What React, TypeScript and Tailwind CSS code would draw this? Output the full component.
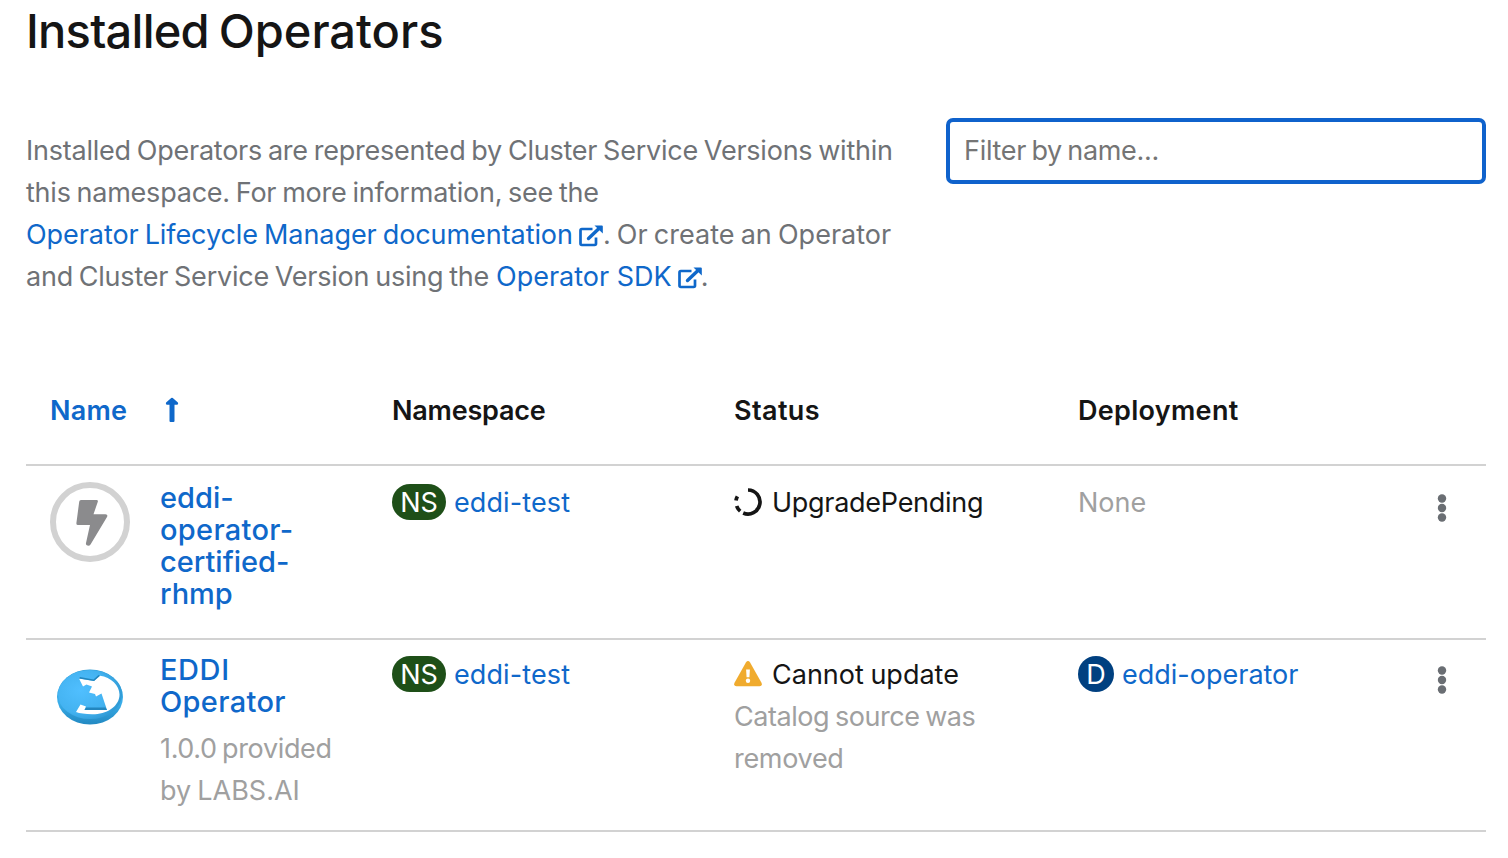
import React from "react";

const ExternalLinkIcon = () => (
  <svg viewBox="0 0 24 22" className="h-[22px] w-6 shrink-0 translate-y-px" fill="none" stroke="#0f68ca">
    <path d="M13.500 4H2.900Q1.500 4 1.500 5.400V18.600Q1.500 20 2.900 20H15.600Q17 20 17 18.600V12.500" strokeWidth="2.700" />
    <path d="M9.500 13.500 20 3.500" strokeWidth="3.400" strokeLinecap="round" />
    <path d="M15.500 0.500H22.800Q23.800 0.500 23.800 1.500V8.500Z" fill="#0f68ca" stroke="none" />
  </svg>
);

const SortUpIcon = () => (
  <svg viewBox="0 0 14 26" className="h-[26px] w-[14px]" fill="#0f68ca">
    <path d="M6.200 1.100Q7 .400 7.800 1.100L12.900 5.600Q13.800 7.600 12.200 7.800H9.500V24Q9.500 25 8.500 25H5.500Q4.500 25 4.500 24V7.800H1.800Q.200 7.600 1.100 5.600Z" />
  </svg>
);

const BoltIcon = () => (
  <svg viewBox="0 0 80 80" className="h-20 w-20 shrink-0">
    <circle cx="40" cy="40" r="37" fill="#fff" stroke="#d2d2d2" strokeWidth="6" />
    <path d="M31 18H46.500Q48.300 18 47.800 19.800L43.500 32.300H55.500Q58.300 32.500 57 35L40.500 62.500Q39.500 64 37.500 63.600Q35.600 63 36 61L40 43H28Q26.200 43 26.400 41L29.200 19.800Q29.400 18 31 18Z" fill="#8b8b8d" />
  </svg>
);

const EddiLogo = () => (
  <svg viewBox="0 0 80 80" className="h-20 w-20 shrink-0">
    <defs>
      <linearGradient id="rim" x1="0" y1="0" x2="0" y2="1">
        <stop offset="0" stopColor="#2f9bd2" />
        <stop offset=".6" stopColor="#3aaeea" />
        <stop offset="1" stopColor="#2289c2" />
      </linearGradient>
      <radialGradient id="face" cx=".35" cy=".42" r=".65">
        <stop offset="0" stopColor="#50bfff" />
        <stop offset=".7" stopColor="#43b2f0" />
        <stop offset="1" stopColor="#309bd6" />
      </radialGradient>
    </defs>
    <ellipse cx="40" cy="40" rx="33" ry="27.500" fill="url(#rim)" />
    <ellipse cx="40" cy="37.500" rx="32" ry="24.500" fill="url(#face)" />
    <path d="M29 21.500 44 24 50 18.800C61 20 69.500 29 69.500 37.500C69.500 48 59 56.500 45 57.200C37 57.500 30 56.500 26 55L30.500 47.500 36 49.500 34.500 53 57 53 51.500 36.500 46 39.500 45 37 39 35.500 42 29.500 36.500 27.500 33 29.500Z" fill="#fff" />
    <path d="M34.500 53 36 50.500 55.500 50.500 57 53Z M29 21.500 30 20 43.500 22.500 48.500 18 50 18.800 44 24Z" fill="#2386be" />
  </svg>
);

const PendingIcon = () => (
  <svg viewBox="0 0 28 28" className="h-7 w-7 shrink-0 -translate-y-px" fill="none" stroke="#151515" strokeWidth="3.700">
    <path d="M14 2A12 12 0 1 1 9.200 25" />
    <path d="M6.200 23.200A12 12 0 0 1 2.700 18" />
    <path d="M2 12.600A12 12 0 0 1 3.400 8.400" />
  </svg>
);

const WarningIcon = () => (
  <svg viewBox="0 0 28 26" className="h-[26px] w-7 shrink-0 -translate-y-px">
    <path d="M11.900 1.500Q14 -1.300 16.100 1.500L27.600 22Q28.500 25 25.600 25.300H2.400Q-.500 25 .400 22Z" fill="#f0ab2e" />
    <path d="M12.100 8.500H15.900L15.400 16.300H12.600Z" fill="#fff" />
    <circle cx="14" cy="19.800" r="2.200" fill="#fff" />
  </svg>
);

const Kebab = () => (
  <svg viewBox="0 0 10 28" className="h-7 w-[10px]" fill="#6a6e73">
    <circle cx="5" cy="4.500" r="4.200" />
    <circle cx="5" cy="14" r="4.200" />
    <circle cx="5" cy="23.500" r="4.200" />
  </svg>
);

const NamespaceCell = () => (
  <div className="flex h-[42px] items-center">
    <span className="-mt-0.5 flex h-9 w-[54px] items-center justify-center rounded-full bg-[#1e4f18] pt-0.5 text-white">NS</span>
    <a className="ml-2 tracking-[0.1px] text-[#0f68ca]">eddi-test</a>
  </div>
);

export default function App() {
  return (
    <main className="h-[858px] w-[1508px] overflow-hidden whitespace-nowrap bg-white pl-[26px] pr-[22px] font-['Inter',sans-serif] text-[27px] leading-[42px] text-[#151515]">
      <h1 className="h-[118px] text-[47px] font-medium leading-[62px] [word-spacing:-2px]">
        <span className="tracking-[-0.75px]">Installed </span><span>Operators</span>
      </h1>
      <section className="flex h-[242px] justify-between">
        <div className="pt-3 text-[#6f7276]">
          <div className="tracking-[-0.23px] [word-spacing:-1.5px]">Installed Operators are represented by Cluster Service Versions within</div>
          <div className="tracking-[-0.23px] [word-spacing:-1.5px]">this namespace. For more information, see the</div>
          <div className="flex items-center">
            <a className="tracking-[-0.07px] text-[#0f68ca] [word-spacing:-1.5px]">Operator Lifecycle Manager documentation</a>
            <span className="ml-[6px] flex"><ExternalLinkIcon /></span>
            <span className="[word-spacing:-1.4px]">. Or create an Operator</span>
          </div>
          <div className="flex items-center">
            <span className="tracking-[-0.23px] [word-spacing:-1.5px]">and Cluster Service Version using the</span>
            <a className="ml-[7px] text-[#0f68ca]">Operator SDK</a>
            <span className="ml-[6px] flex"><ExternalLinkIcon /></span>
            <span className="-ml-px">.</span>
          </div>
        </div>
        <input
          className="h-[66px] w-[540px] rounded-[7px] border-4 border-[#0f62cc] px-[14px] pb-[2px] tracking-[-0.3px] outline-none [word-spacing:-2px] placeholder:text-[#757575]"
          placeholder="Filter by name..."
        />
      </section>
      <section>
        <div className="grid h-[106px] grid-cols-[342px_342px_344px_1fr] border-b-2 border-[#d2d2d2] pl-6 pt-[30px] font-semibold">
          <div className="flex h-[42px] items-center text-[#0f68ca]">
            <span className="w-[115px] tracking-[0.2px]">Name</span>
            <span className="-mt-0.5"><SortUpIcon /></span>
          </div>
          <span className="tracking-[-0.2px]">Namespace</span>
          <span className="tracking-[0.4px]">Status</span>
          <span className="tracking-[0.3px]">Deployment</span>
        </div>
        <div className="grid h-[174px] grid-cols-[342px_342px_344px_352px_1fr] border-b-2 border-[#d2d2d2] pl-6 pt-4">
          <div className="flex items-start">
            <BoltIcon />
            <a className="ml-[30px] text-[29px] font-medium leading-8 text-[#0f68ca]">
              <span className="block">eddi-</span>
              <span className="block tracking-[0.3px]">operator-</span>
              <span className="block">certified-</span>
              <span className="block">rhmp</span>
            </a>
          </div>
          <NamespaceCell />
          <div className="flex h-[42px] items-center">
            <PendingIcon />
            <span className="ml-[10px] tracking-[-0.28px]">UpgradePending</span>
          </div>
          <span className="text-[#a0a0a0]">None</span>
          <div className="pl-[7px] pt-3"><Kebab /></div>
        </div>
        <div className="grid h-[192px] grid-cols-[342px_342px_344px_352px_1fr] border-b-2 border-[#d2d2d2] pl-6 pt-[14px]">
          <div className="flex items-start">
            <div className="pt-[3px]"><EddiLogo /></div>
            <div className="ml-[30px]">
              <a className="block text-[29px] font-medium leading-8 text-[#0f68ca]">
                <span className="block tracking-[0.6px]">EDDI</span>
                <span className="block tracking-[0.35px]">Operator</span>
              </a>
              <div className="pt-[10px] text-[#a0a0a0]">
                <span className="block tracking-[-0.35px] [word-spacing:-2px]">1.0.0 provided</span>
                <span className="block [word-spacing:-1.5px]">by LABS.AI</span>
              </div>
            </div>
          </div>
          <NamespaceCell />
          <div>
            <div className="flex h-[42px] items-center">
              <WarningIcon />
              <span className="ml-[10px] [word-spacing:-1px]">Cannot update</span>
            </div>
            <div className="text-[#a0a0a0]">
              <span className="block tracking-[-0.45px] [word-spacing:-1.4px]">Catalog source was</span>
              <span className="block tracking-[-0.3px]">removed</span>
            </div>
          </div>
          <div className="flex h-[42px] items-center">
            <span className="-mt-0.5 flex h-9 w-9 items-center justify-center rounded-full bg-[#004080] pt-0.5 text-white">D</span>
            <a className="ml-2 text-[#0f68ca]">eddi-operator</a>
          </div>
          <div className="pl-[7px] pt-3"><Kebab /></div>
        </div>
      </section>
    </main>
  );
}
